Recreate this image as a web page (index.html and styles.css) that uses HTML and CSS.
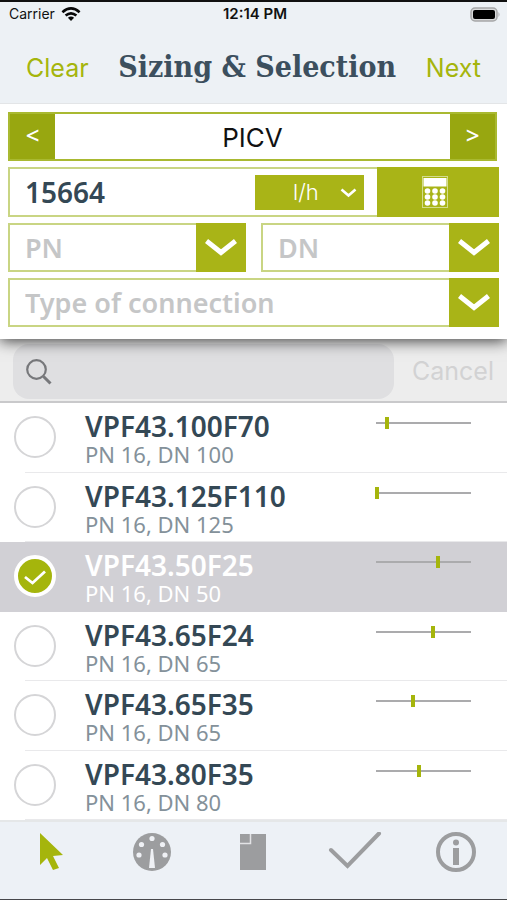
FILE: index.html
```html
<!DOCTYPE html>
<html lang="en">
<head>
<meta charset="utf-8">
<meta name="viewport" content="width=device-width, initial-scale=1">
<title>Sizing &amp; Selection</title>
<link rel="stylesheet" href="styles.css">
</head>
<body>
<div class="app">
  <div class="status">
    <span class="carrier">Carrier
      <svg width="20" height="14" viewBox="0 0 20 14" aria-hidden="true"><g fill="none" stroke="#080808" stroke-width="2.6"><path d="M1.4 5.2Q10-2.4 18.6 5.2"/><path d="M4.6 8.6Q10 4 15.4 8.6"/></g><path d="M6.9 10.7Q10 8.2 13.1 10.7L10 14Z" fill="#080808"/></svg>
    </span>
    <span class="clock">12:14 PM</span>
    <span class="battery"><svg width="31" height="15" viewBox="0 0 31 15" aria-hidden="true"><rect x="1" y="1" width="26" height="13" rx="4" fill="#d9dadb" stroke="#a6a7a8" stroke-width="1.5"/><rect x="3" y="3" width="22" height="9" rx="2" fill="#000"/><path d="M28.5 5Q30.5 7.500 28.500 10Z" fill="#a6a7a8"/></svg></span>
  </div>
  <header class="header">
    <button class="link" type="button">Clear</button>
    <h1>Sizing &amp; Selection</h1>
    <button class="link" type="button">Next</button>
  </header>
  <main class="main">
    <form class="filters">
      <div class="stepper">
        <button class="step" type="button" aria-label="Previous type">&lt;</button>
        <output class="kind">PICV</output>
        <button class="step" type="button" aria-label="Next type">&gt;</button>
      </div>
      <div class="flow">
        <input class="amount" type="text" value="15664" aria-label="Flow">
        <div class="unit">
          <select aria-label="Unit"><option>l/h</option></select>
          <svg width="17" height="10" viewBox="0 0 17 10" aria-hidden="true"><path d="M1.500 1.500L8.500 7.500L15.500 1.500" fill="none" stroke="#fff" stroke-width="2.600"/></svg>
        </div>
        <button class="calc" type="button" aria-label="Calculator">
          <svg width="26" height="32" viewBox="0 0 26 32" aria-hidden="true"><rect x=".5" y=".5" width="25" height="31" fill="none" stroke="#d3dc8d"/><rect x="1.500" y="2" width="23" height="8.500" fill="#fff"/><g fill="#fff"><circle cx="5.500" cy="15" r="2.800"/><circle cx="13" cy="15" r="2.800"/><circle cx="20.500" cy="15" r="2.800"/><circle cx="5.500" cy="21" r="2.800"/><circle cx="13" cy="21" r="2.800"/><circle cx="20.500" cy="21" r="2.800"/><circle cx="5.500" cy="27" r="2.800"/><circle cx="13" cy="27" r="2.800"/><circle cx="20.500" cy="27" r="2.800"/></g></svg>
        </button>
      </div>
      <div class="pair">
        <div class="drop"><select aria-label="PN"><option>PN</option></select><span class="arrow"><svg width="32" height="18" viewBox="0 0 32 18" aria-hidden="true"><path d="M1.500 2L16 13.500L30.500 2" fill="none" stroke="#fff" stroke-width="5"/></svg></span></div>
        <div class="drop"><select aria-label="DN"><option>DN</option></select><span class="arrow"><svg width="32" height="18" viewBox="0 0 32 18" aria-hidden="true"><path d="M1.500 2L16 13.500L30.500 2" fill="none" stroke="#fff" stroke-width="5"/></svg></span></div>
      </div>
      <div class="drop"><select aria-label="Type of connection"><option>Type of connection</option></select><span class="arrow"><svg width="32" height="18" viewBox="0 0 32 18" aria-hidden="true"><path d="M1.500 2L16 13.500L30.500 2" fill="none" stroke="#fff" stroke-width="5"/></svg></span></div>
    </form>
    <div class="search">
      <label class="searchbox">
        <svg width="26" height="26" viewBox="0 0 26 26" aria-hidden="true"><circle cx="10.500" cy="10.500" r="9.300" fill="none" stroke="#77787b" stroke-width="2.200"/><path d="M17.500 17.500L24.500 24.500" stroke="#77787b" stroke-width="3"/></svg>
        <input type="search" aria-label="Search">
      </label>
      <button class="cancel" type="button">Cancel</button>
    </div>
    <div class="list">
      <label class="item"><input type="radio" name="valve"><span class="text"><b>VPF43.100F70</b><span class="spec">PN 16, DN 100</span></span><span class="scale"><i style="left:12%"></i></span></label>
      <label class="item"><input type="radio" name="valve"><span class="text"><b>VPF43.125F110</b><span class="spec">PN 16, DN 125</span></span><span class="scale"><i style="left:1%"></i></span></label>
      <label class="item"><input type="radio" name="valve" checked><span class="text"><b>VPF43.50F25</b><span class="spec">PN 16, DN 50</span></span><span class="scale"><i style="left:65%"></i></span><svg class="tick" width="42" height="42" viewBox="0 0 42 42" aria-hidden="true"><path d="M11 22L18.500 28L31 16.500" fill="none" stroke="#fff" stroke-width="2.800"/></svg></label>
      <label class="item"><input type="radio" name="valve"><span class="text"><b>VPF43.65F24</b><span class="spec">PN 16, DN 65</span></span><span class="scale"><i style="left:60%"></i></span></label>
      <label class="item"><input type="radio" name="valve"><span class="text"><b>VPF43.65F35</b><span class="spec">PN 16, DN 65</span></span><span class="scale"><i style="left:39%"></i></span></label>
      <label class="item"><input type="radio" name="valve"><span class="text"><b>VPF43.80F35</b><span class="spec">PN 16, DN 80</span></span><span class="scale"><i style="left:45%"></i></span></label>
    </div>
  </main>
  <nav class="tabs">
    <a href="#select" aria-label="Selection"><svg width="40" height="40" viewBox="0 0 40 40" aria-hidden="true"><path d="M9 1L32 23L22 24L28 36L22 38L16 26L9 33Z" fill="#a5b50c"/></svg></a>
    <a href="#gauge" aria-label="Gauge"><svg width="40" height="40" viewBox="0 0 40 40" aria-hidden="true"><circle cx="20" cy="20" r="19" fill="#9c9d9f"/><g fill="#eff1f5"><circle cx="20" cy="6.500" r="2.600"/><circle cx="9.500" cy="12.500" r="2.600"/><circle cx="30.500" cy="12.500" r="2.600"/><circle cx="7" cy="23" r="2.600"/><circle cx="33" cy="23" r="2.600"/><path d="M19 17H21L23 36H17Z"/></g></svg></a>
    <a href="#documents" aria-label="Documents"><svg width="40" height="40" viewBox="0 0 40 40" aria-hidden="true"><path d="M7 2H33V38H7Z" fill="#9c9d9f"/><path d="M7 11.500H17.500V2" fill="none" stroke="#e2e3e5" stroke-width="1.500"/></svg></a>
    <a href="#done" aria-label="Done"><svg width="54" height="40" viewBox="0 0 54 40" aria-hidden="true"><path d="M3 18L19.500 34L51 1.500" fill="none" stroke="#9c9d9f" stroke-width="4" stroke-linecap="round"/></svg></a>
    <a href="#info" aria-label="Information"><svg width="40" height="40" viewBox="0 0 40 40" aria-hidden="true"><circle cx="20" cy="20" r="18" fill="none" stroke="#9c9d9f" stroke-width="4"/><circle cx="20" cy="10.500" r="3" fill="#9c9d9f"/><path d="M17 16H23V33H17Z" fill="#9c9d9f"/></svg></a>
  </nav>
</div>
</body>
</html>
```
FILE: styles.css
```css
* { box-sizing: border-box; }
body { margin: 0; background: #fff; font-family: "Noto Sans", sans-serif; color: #344855; }
button, input, select { font: inherit; color: inherit; margin: 0; padding: 0; border: 0; border-radius: 0; background: none; appearance: none; }
svg { display: block; flex: none; }

.app { min-height: 100vh; display: flex; flex-direction: column; border-top: 2px solid #111; border-bottom: 1px solid #46474b; }

.status { display: grid; grid-template-columns: 1fr auto 1fr; align-items: center; height: 24px; padding: 0 6px 0 9px; background: #edf1f5; color: #111; font: 14px/20px Inter, sans-serif; }
.carrier { display: flex; align-items: center; gap: 6px; }
.clock { font-size: 15px; font-weight: 600; }
.battery { justify-self: end; }

.header { display: flex; align-items: center; justify-content: space-between; height: 78px; padding: 6px 26px 0; background: #edf1f5; border-bottom: 1px solid #e3e5e7; }
.header h1 { margin: 0 0 2px; font: bold 30px/40px "DejaVu Serif Condensed", "DejaVu Serif", serif; font-stretch: condensed; white-space: nowrap; color: #3c4f5e; }
.link { font: 25px/32px Inter, sans-serif; color: #a5b50c; }

.main { flex: 1; display: flex; flex-direction: column; }
.filters { position: relative; z-index: 1; display: grid; grid-template-columns: minmax(0, 1fr); gap: 6px; padding: 8px 8px 12px; background: #fff; box-shadow: 0 2px 14px rgba(0, 0, 0, .75); clip-path: inset(0 0 -24px 0); }
.stepper { display: flex; height: 49px; margin-right: 2px; border: 2px solid #a9b931; }
.step { flex: none; width: 45px; background: #98a710; color: #fff; font-size: 24px; font-weight: 500; line-height: 40px; padding-bottom: 3px; }
.kind { flex: 1; text-align: center; font: 26px/47px Inter, sans-serif; color: #111; }
.flow { display: flex; align-items: center; height: 50px; border: 2px solid #c9d583; }
.amount { flex: 1; min-width: 0; height: 44px; padding-left: 15px; font-size: 28px; font-weight: 600; }
.unit { position: relative; flex: none; width: 109px; margin-right: 13px; background: #a9b417; color: #fff; }
.unit select { display: block; width: 100%; height: 35px; padding-left: 38px; font: 22px/35px Inter, sans-serif; font-weight: 300; }
.unit svg { position: absolute; right: 7px; top: 13px; pointer-events: none; }
.calc { flex: none; display: grid; place-items: center; width: 122px; height: 50px; margin-right: -2px; padding-right: 6px; background: #a9b417; }
.pair { display: grid; grid-template-columns: repeat(2, minmax(0, 1fr)); gap: 15px; }
.drop { position: relative; height: 49px; border: 2px solid #c9d583; }
.drop select { display: block; width: 100%; height: 45px; padding-left: 15px; font-size: 27px; font-weight: 600; color: #c5c6c7; }
.arrow { position: absolute; top: -2px; right: -2px; bottom: -2px; width: 50px; display: grid; place-items: center; background: #a9b417; pointer-events: none; }

.search { display: flex; align-items: flex-start; gap: 18px; height: 64px; padding: 5px 13px 2px; background: #ededed; border-bottom: 2px solid #c9c9cb; }
.searchbox { flex: 1; display: flex; align-items: center; gap: 12px; height: 55px; padding: 0 13px; border-radius: 16px; background: #dfdfe1; }
.searchbox input { flex: 1; min-width: 0; height: 36px; }
.cancel { font: 25px/54px Inter, sans-serif; color: #d2d2d3; }

.list { flex: 1; display: grid; grid-auto-rows: 1fr; }
.item { position: relative; display: flex; align-items: flex-start; min-height: 69px; padding: 0 36px 0 14px; background: linear-gradient(#e9e9eb, #e9e9eb) 25px 100% / 100% 1px no-repeat; }
.item input { flex: none; margin-top: 13px; width: 42px; height: 42px; border: 2px solid #d5d5d7; border-radius: 50%; background: #fff; }
.item input:checked { border: 4px solid #fff; background: #a5b50c; }
.item:has(:checked) { background: #d1d0d5; color: #fff; }
.tick { position: absolute; left: 14px; top: 13px; }
.text { flex: 1; margin-left: 29px; padding-top: 8px; }
.text b { display: block; font-size: 28px; line-height: 30px; font-weight: 600; }
.spec { display: block; font-size: 22px; line-height: 26px; color: #84919a; }
.item:has(:checked) .spec { color: #fff; }
.scale { position: relative; width: 95px; height: 2px; margin-top: 19px; background: #ababad; }
.scale i { position: absolute; top: -5px; width: 4px; height: 12px; margin-left: -2px; background: #a5b50c; }

.tabs { display: grid; grid-template-columns: repeat(5, 1fr); height: 79px; padding-top: 10px; background: #edf1f6; border-top: 2px solid #e5e7e8; }
.tabs a { display: flex; justify-content: center; }
```
